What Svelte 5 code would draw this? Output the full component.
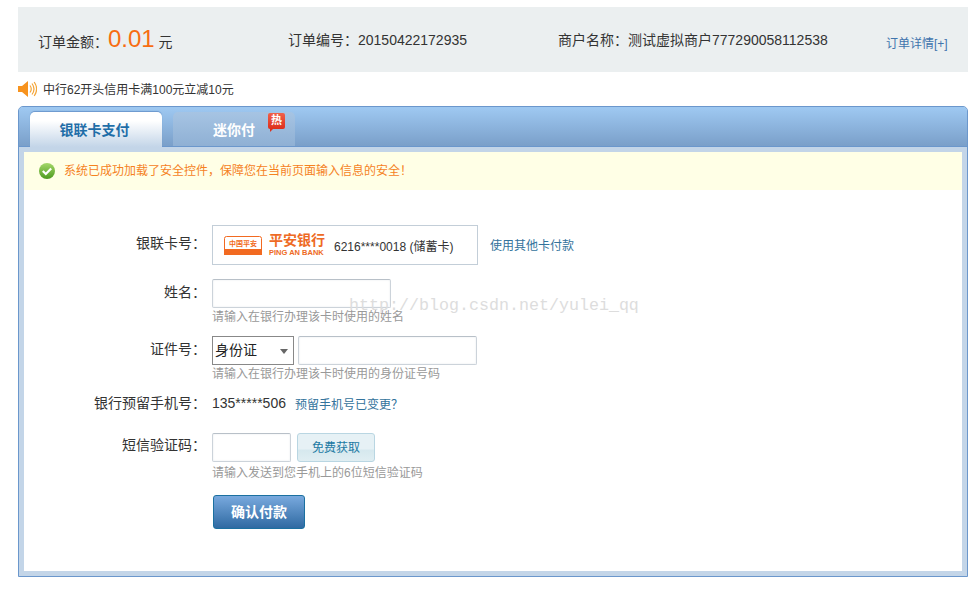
<script>
    const fields = {
        amount: "0.01",
        orderNo: "20150422172935",
        merchant: "测试虚拟商户777290058112538"
    };
</script>

<div class="page">
    <div class="summary">
        <div class="cell amount">
            订单金额：<strong>{fields.amount}</strong> 元
        </div>
        <div class="cell order">订单编号：{fields.orderNo}</div>
        <div class="cell merchant">商户名称：{fields.merchant}</div>
        <a class="details" href="#details">订单详情[+]</a>
    </div>

    <div class="promo">
        <svg width="19" height="18" viewBox="0 0 19 18">
            <path d="M0 6h4l6-5v16l-6-5H0z" fill="#f7931e" />
            <path d="M12 5.5q2.5 3.5 0 7M14 3.5q4 5.5 0 11M16.200 2q4.800 7 0 14" fill="none" stroke="#f4a63a" stroke-width="1.200" />
        </svg>
        <span>中行62开头信用卡满100元立减10元</span>
    </div>

    <div class="panel">
        <div class="tabs">
            <div class="tab active">银联卡支付</div>
            <div class="tab">
                迷你付
                <span class="hot">热</span>
            </div>
        </div>

        <div class="body">
            <div class="inner">
                <div class="notice">
                    <svg width="16" height="16" viewBox="0 0 16 16">
                        <defs>
                            <linearGradient id="ok" x1="0" y1="0" x2="0" y2="1">
                                <stop offset="0" stop-color="#a5d86a" />
                                <stop offset="1" stop-color="#4c9a1e" />
                            </linearGradient>
                        </defs>
                        <circle cx="8" cy="8" r="8" fill="url(#ok)" />
                        <path d="M3.800 8l3 3 5.400-5.500" fill="none" stroke="#fff" stroke-width="2.200" />
                    </svg>
                    <span>系统已成功加载了安全控件，保障您在当前页面输入信息的安全！</span>
                </div>

                <form class="form">
                    <div class="row card-row">
                        <div class="label">银联卡号：</div>
                        <div class="card">
                            <svg class="bank-mark" width="38" height="19" viewBox="0 0 38 19">
                                <rect x="0.500" y="0.500" width="37" height="18" rx="2" fill="#fff" stroke="#f26a21" />
                                <rect x="0" y="13" width="38" height="6" fill="#f26a21" />
                                <text x="19" y="10" text-anchor="middle" class="mark-text">中国平安</text>
                            </svg>
                            <div class="bank-name">
                                <span class="cn">平安银行</span>
                                <span class="en">PING AN BANK</span>
                            </div>
                            <span class="card-no">6216****0018 (储蓄卡)</span>
                        </div>
                        <a class="link other" href="#other">使用其他卡付款</a>
                    </div>

                    <div class="row name-row">
                        <div class="label">姓名：</div>
                        <input class="input name" type="text" />
                    </div>
                    <div class="hint">请输入在银行办理该卡时使用的姓名</div>

                    <div class="row id-row">
                        <div class="label">证件号：</div>
                        <div class="select">身份证<i></i></div>
                        <input class="input id" type="text" />
                    </div>
                    <div class="hint">请输入在银行办理该卡时使用的身份证号码</div>

                    <div class="row phone-row">
                        <div class="label">银行预留手机号：</div>
                        <span class="phone">135*****506</span>
                        <a class="link changed" href="#changed">预留手机号已变更？</a>
                    </div>

                    <div class="row sms-row">
                        <div class="label">短信验证码：</div>
                        <input class="input sms" type="text" />
                        <button class="get-code" type="button">免费获取</button>
                    </div>
                    <div class="hint last">请输入发送到您手机上的6位短信验证码</div>

                    <button class="submit" type="button">确认付款</button>
                </form>
            </div>
        </div>
    </div>

    <div class="watermark">http://blog.csdn.net/yulei_qq</div>
</div>

<style>
    :global(body) {
        margin: 0;
        background: #fff;
    }
    .page {
        position: relative;
        width: 950px;
        height: 582px;
        padding: 7px 1px 0 18px;
        font-family: "Liberation Sans", "Noto Sans CJK SC", sans-serif;
        font-size: 14px;
        color: #333;
    }
    a {
        text-decoration: none;
    }

    .summary {
        display: flex;
        align-items: center;
        height: 65px;
        padding-left: 20px;
        background: #ebeff0;
    }
    .cell {
        white-space: nowrap;
    }
    .amount {
        width: 250px;
        padding-bottom: 1px;
    }
    .amount strong {
        font-size: 24px;
        font-weight: normal;
        color: #f76d12;
    }
    .order {
        width: 270px;
        padding-bottom: 1px;
    }
    .merchant {
        width: 328px;
        padding-bottom: 1px;
    }
    .details {
        font-size: 12px;
        color: #3f74ad;
        padding-top: 5px;
    }

    .promo {
        display: flex;
        align-items: center;
        height: 18px;
        margin-top: 8px;
        font-size: 12px;
        color: #333;
    }
    .promo span {
        margin-left: 6px;
        padding-bottom: 2px;
    }

    .panel {
        width: 948px;
        margin-top: 8px;
        border: 1px solid #6b97cc;
        border-radius: 5px 5px 0 0;
        background: #c3d5e8;
    }
    .tabs {
        display: flex;
        align-items: flex-end;
        gap: 11px;
        height: 39px;
        padding-left: 11px;
        border-bottom: 1px solid #6b97cc;
        border-radius: 4px 4px 0 0;
        background: linear-gradient(#9dc7f0 5%, #7a9fc9);
    }
    .tab {
        position: relative;
        width: 122px;
        height: 34px;
        border-radius: 5px 5px 0 0;
        background: linear-gradient(#a6c4e3, #8fb0d4);
        color: #fff;
        font-size: 14px;
        font-weight: bold;
        line-height: 36px;
        text-align: center;
    }
    .tab.active {
        box-sizing: border-box;
        width: 132px;
        height: 35px;
        margin-bottom: -1px;
        padding-right: 3px;
        background: linear-gradient(#fff 25%, #c3d5e8);
        box-shadow: 0 -1px 1px #6b97cc;
        color: #1f6ea8;
    }
    .hot {
        position: absolute;
        top: 1px;
        right: 10px;
        width: 17px;
        height: 16px;
        border-radius: 2px;
        background: linear-gradient(#f0604a, #dd2f1c);
        color: #fff;
        font-size: 11px;
        line-height: 15px;
    }
    .hot::after {
        content: "";
        position: absolute;
        left: 2px;
        bottom: -3px;
        border-top: 3px solid #dd2f1c;
        border-right: 3px solid transparent;
    }

    .body {
        padding: 5px;
    }
    .inner {
        height: 419px;
        background: #fff;
    }
    .notice {
        display: flex;
        align-items: center;
        height: 38px;
        padding-left: 15px;
        background: #ffffe6;
        color: #f5821f;
        font-size: 12px;
    }
    .notice span {
        margin-left: 9px;
        padding-bottom: 4px;
    }

    .form {
        padding-top: 35px;
    }
    .row {
        display: flex;
        align-items: center;
    }
    .label {
        flex: none;
        box-sizing: border-box;
        width: 182px;
        margin-right: 6px;
        padding-bottom: 6px;
        text-align: right;
        font-size: 14px;
    }
    .phone-row .label {
        padding-bottom: 2px;
    }
    .sms-row .label {
        padding-bottom: 8px;
    }
    .card {
        display: flex;
        align-items: center;
        box-sizing: border-box;
        width: 266px;
        height: 40px;
        padding-left: 11px;
        border: 1px solid #c3ced8;
    }
    .bank-mark {
        flex: none;
    }
    .mark-text {
        font-size: 7px;
        font-weight: bold;
        fill: #f26a21;
    }
    .bank-name {
        display: flex;
        flex-direction: column;
        width: 65px;
        margin-left: 7px;
        color: #ee6a24;
    }
    .cn {
        font-size: 14px;
        font-weight: bold;
        line-height: 15px;
        white-space: nowrap;
    }
    .en {
        font-size: 7.500px;
        font-weight: bold;
        line-height: 9px;
        white-space: nowrap;
    }
    .card-no {
        margin-left: 0;
        font-size: 12px;
        white-space: nowrap;
    }
    .link {
        font-size: 12px;
        color: #33739c;
    }
    .other {
        margin-left: 12px;
        padding-bottom: 2px;
    }

    .name-row {
        margin-top: 14px;
    }
    .input {
        display: block;
        box-sizing: border-box;
        height: 29px;
        margin: 0;
        border: 1px solid #ccd3da;
        border-top-color: #b8c0c8;
        border-radius: 2px;
        background: #fff;
        box-shadow: inset 0 0 2px #e4e8ec;
    }
    .input.name {
        width: 179px;
    }
    .input.id {
        width: 179px;
        margin-left: 4px;
    }
    .input.sms {
        width: 79px;
    }
    .hint {
        height: 16px;
        margin-left: 188px;
        font-size: 12px;
        line-height: 18px;
        color: #999;
    }
    .hint.last {
        padding-top: 2px;
    }

    .id-row {
        margin-top: 12px;
    }
    .select {
        position: relative;
        box-sizing: border-box;
        width: 82px;
        height: 29px;
        padding-left: 2px;
        border: 1px solid #888;
        font-size: 14px;
        line-height: 26px;
        color: #222;
    }
    .select i {
        position: absolute;
        right: 5px;
        top: 12px;
        border-top: 5px solid #666;
        border-left: 4px solid transparent;
        border-right: 4px solid transparent;
    }

    .phone-row {
        height: 20px;
        margin-top: 12px;
    }
    .phone {
        font-size: 14px;
        padding-bottom: 1px;
        color: #333;
    }
    .changed {
        margin-left: 9px;
    }

    .sms-row {
        margin-top: 20px;
    }
    .get-code {
        box-sizing: border-box;
        width: 78px;
        height: 29px;
        margin-left: 6px;
        padding: 0 0 3px;
        border: 1px solid #b9d6e2;
        border-radius: 3px;
        background: linear-gradient(#e6f1f5 55%, #d6e8ee 60%, #e0eef2);
        color: #1c7aa3;
        font-family: inherit;
        font-size: 12px;
    }
    .submit {
        display: block;
        box-sizing: border-box;
        width: 92px;
        height: 34px;
        margin: 15px 0 0 189px;
        padding: 0 0 3px;
        border: 1px solid #1b70a0;
        border-radius: 3px;
        background: linear-gradient(#79a9de, #2f6aa2);
        color: #fff;
        font-family: inherit;
        font-size: 14px;
        font-weight: bold;
    }

    .watermark {
        position: absolute;
        left: 349px;
        top: 296px;
        font-family: "Liberation Mono", monospace;
        font-size: 16.660px;
        line-height: 20px;
        color: #ddd;
        pointer-events: none;
    }
</style>
